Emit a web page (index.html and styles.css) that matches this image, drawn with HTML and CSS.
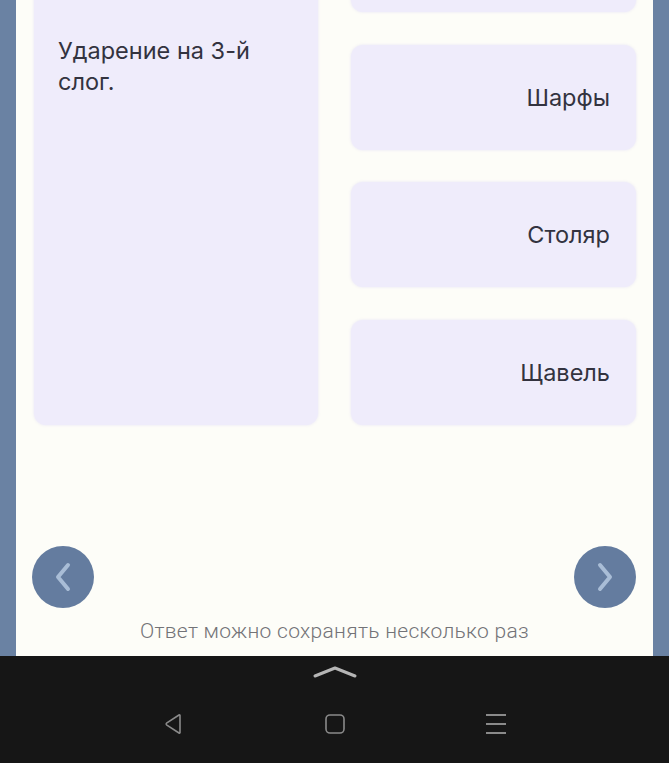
FILE: index.html
```html
<!DOCTYPE html>
<html lang="ru">
<head>
<meta charset="utf-8">
<link rel="stylesheet" href="styles.css">
</head>
<body>
<div class="screen">
  <div class="panel">
    <div class="grid">
      <div class="card card-left">Ударение на 3-й слог.</div>
      <div class="col">
        <div class="card card-right"></div>
        <div class="card card-right">Шарфы</div>
        <div class="card card-right">Столяр</div>
        <div class="card card-right">Щавель</div>
      </div>
    </div>
    <div class="nav">
      <div class="circle">
        <svg width="62" height="62" viewBox="0 0 62 62"><path d="M36 19 L26 31 L36 43" fill="none" stroke="#a9bdd6" stroke-width="4" stroke-linecap="round" stroke-linejoin="round"/></svg>
      </div>
      <div class="circle">
        <svg width="62" height="62" viewBox="0 0 62 62"><path d="M26 19 L36 31 L26 43" fill="none" stroke="#a9bdd6" stroke-width="4" stroke-linecap="round" stroke-linejoin="round"/></svg>
      </div>
    </div>
    <div class="note">Ответ можно сохранять несколько раз</div>
  </div>
</div>
<div class="sysbar">
  <svg class="up" width="44" height="14" viewBox="0 0 44 14"><path d="M2 11 L22 3 L42 11" fill="none" stroke="#b5b5b5" stroke-width="3" stroke-linecap="round" stroke-linejoin="round"/></svg>
  <div class="keys">
    <svg width="22" height="22" viewBox="0 0 22 22"><path d="M17 2.5 L17 19.5 Q17 20.5 16 20 L3.5 11.8 Q2.7 11 3.5 10.2 L16 2 Q17 1.5 17 2.5 Z" fill="none" stroke="#8a8a8a" stroke-width="1.6" stroke-linejoin="round"/></svg>
    <svg width="22" height="22" viewBox="0 0 22 22"><rect x="2" y="2" width="18" height="18" rx="4" fill="none" stroke="#8a8a8a" stroke-width="1.6"/></svg>
    <svg width="24" height="22" viewBox="0 0 24 22"><path d="M2 2 H22 M2 11 H22 M2 20 H22" fill="none" stroke="#8a8a8a" stroke-width="1.8"/></svg>
  </div>
</div>
</body>
</html>
```
FILE: styles.css
```css
html, body {
  margin: 0;
  padding: 0;
}
body {
  width: 669px;
  height: 763px;
  overflow: hidden;
  display: flex;
  flex-direction: column;
  background: #6a82a3;
  font-family: Inter, "Noto Sans", sans-serif;
}
.screen {
  height: 656px;
  padding: 0 16px;
  box-sizing: border-box;
  background: #6a82a3;
  flex: none;
}
.panel {
  height: 656px;
  background: #fdfdf8;
  overflow: hidden;
  display: flex;
  flex-direction: column;
}
.grid {
  margin-top: -93px;
  padding: 0 17px 0 18px;
  display: grid;
  grid-template-columns: 284px 285px;
  column-gap: 33px;
}
.col {
  display: flex;
  flex-direction: column;
  gap: 32.5px;
}
.card {
  background: #efecfb;
  border-radius: 12px;
  box-shadow: 0 0 3px rgba(230, 226, 245, 0.9);
  color: #33333f;
  font-size: 23.5px;
  line-height: 31px;
  font-weight: 400;
  -webkit-font-smoothing: antialiased;
}
.card-left {
  padding: 128px 24px 0 24px;
  height: 518px;
  box-sizing: border-box;
}
.card-right {
  height: 105px;
  display: flex;
  align-items: center;
  justify-content: flex-end;
  padding-right: 26px;
  box-sizing: border-box;
}
.nav {
  margin-top: 121px;
  padding: 0 17px 0 16px;
  display: flex;
  justify-content: space-between;
}
.circle {
  width: 62px;
  height: 62px;
  border-radius: 50%;
  background: #647c9f;
  display: flex;
}
.note {
  margin-top: 10px;
  text-align: center;
  color: #737377;
  font-family: Roboto, "Noto Sans", sans-serif;
  font-size: 21px;
  line-height: 26px;
  font-weight: 300;
  letter-spacing: 0.3px;
}
.sysbar {
  flex: 1;
  background: #161616;
  display: flex;
  flex-direction: column;
  align-items: center;
}
.up {
  margin-top: 9px;
  margin-left: 1px;
}
.keys {
  margin-top: 34px;
  width: 345px;
  margin-left: 2px;
  display: flex;
  justify-content: space-between;
  align-items: center;
}
```
